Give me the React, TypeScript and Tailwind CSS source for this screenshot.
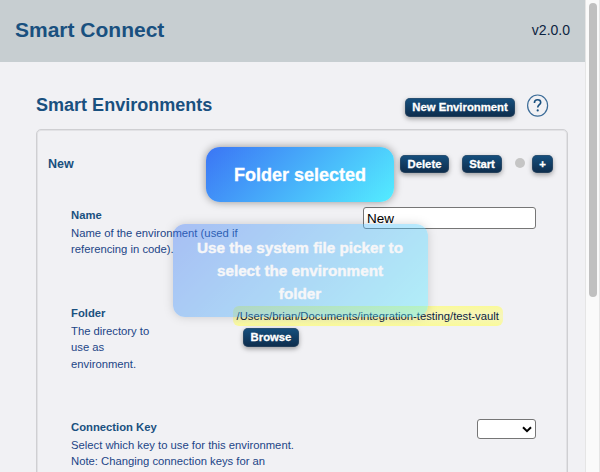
import React from "react";

const buttonStyle =
  "flex shrink-0 items-center justify-center rounded-[5px] bg-linear-to-b from-[#15507f] to-[#0d2c4b] pt-px text-[11.3px] leading-none font-bold text-white shadow-[0_2px_5px_rgba(0,0,0,0.35)] ring-1 ring-inset ring-[#3b5268]/50 [-webkit-text-stroke:0.3px_white]";

function Button({ label, className }: { label: string; className: string }) {
  return (
    <button type="button" className={`${buttonStyle} ${className}`}>
      {label}
    </button>
  );
}

function Setting({
  title,
  lines,
  className,
  children,
}: {
  title: string;
  lines: string[];
  className: string;
  children: React.ReactNode;
}) {
  return (
    <section className={`flex items-start justify-between pr-[31px] pl-[34px] ${className}`}>
      <div className="shrink-0 whitespace-nowrap text-[11.27px] leading-[16.5px] text-[#1c4587]">
        <h3 className="mb-px font-bold text-[#19507f]">{title}</h3>
        {lines.map((line) => (
          <p key={line}>{line}</p>
        ))}
      </div>
      {children}
    </section>
  );
}

export default function App() {
  return (
    <div
      className="relative flex h-[472px] w-[600px] overflow-hidden bg-[#f1f1f4]"
      style={{ fontFamily: '"Liberation Sans", Arial, sans-serif' }}
    >
      <div className="flex w-[585px] flex-col">
        <header className="flex h-[62px] shrink-0 items-center justify-between bg-[#c7ced1] pr-[15px] pl-[15px] pb-[2px]">
          <h1 className="text-[21px] leading-6 font-bold text-[#19507f]">Smart Connect</h1>
          <span className="text-[14px] leading-5 text-[#0c2340]">v2.0.0</span>
        </header>

        <main className="flex flex-1 flex-col pr-[17px] pl-[36px]">
          <div className="flex h-[67px] shrink-0 items-start pt-[32px]">
            <h2 className="flex-1 text-[18.05px] leading-[22px] font-bold text-[#19507f]">
              Smart Environments
            </h2>
            <Button label="New Environment" className="mt-[4px] h-[19px] w-[110px]" />
            <svg viewBox="0 0 22 24" className="mr-[19px] ml-[12px] h-[24px] w-[22px]" fill="none">
              <ellipse cx="10.6" cy="11.6" rx="10" ry="10.6" stroke="#3c6c98" strokeWidth="1.2" />
              <path
                d="M7.4 9C7.4 6.8 8.7 5.8 10.6 5.8C12.5 5.8 13.7 6.8 13.7 8.4C13.7 10.6 10.7 10.8 10.7 13.6"
                stroke="#19507f"
                strokeWidth="1.6"
              />
              <circle cx="10.7" cy="16.4" r="1.1" fill="#19507f" />
            </svg>
          </div>

          <div className="h-[400px] w-[532px] shrink-0 rounded-[5px] border border-[#cfcfd2] shadow-[inset_0_0_0_1px_#e2e2e5]">
            <div className="flex items-start pt-[25px] pl-[11px]">
              <span className="flex-1 pt-px text-[12.5px] leading-4 font-bold text-[#19507f]">
                New
              </span>
              <Button label="Delete" className="h-[18px] w-[49px]" />
              <Button label="Start" className="ml-[13px] h-[18px] w-[40px]" />
              <span className="mt-[3px] ml-[13px] h-[10px] w-[10px] rounded-full bg-[#c5c5c5]" />
              <Button label="+" className="mr-[14px] ml-[7px] h-[18px] w-[21px]" />
            </div>

            <Setting
              title="Name"
              lines={["Name of the environment (used if", "referencing in code)."]}
              className="mt-[34px] h-[98px]"
            >
              <div className="h-[22px] w-[173px] rounded-[3px] border border-[#767676] bg-white px-[3px] text-[13.5px] leading-[21px] text-black">
                New
              </div>
            </Setting>

            <Setting
              title="Folder"
              lines={["The directory to", "use as", "environment."]}
              className="h-[114px]"
            >
              <div className="mr-[33px] flex flex-col items-start">
                <span className="mt-[1px] h-[20px] w-[270px] rounded-[6px] bg-linear-to-b from-[#fafa99] via-[#f6f5bd] to-[#fafa99] pl-[3.5px] text-[11.27px] leading-[20px] whitespace-nowrap text-[#0c2340]">
                  /Users/brian/Documents/integration-testing/test-vault
                </span>
                <Button label="Browse" className="mt-[2px] ml-[10px] h-[19px] w-[56px]" />
              </div>
            </Setting>

            <Setting
              title="Connection Key"
              lines={[
                "Select which key to use for this environment.",
                "Note: Changing connection keys for an",
              ]}
              className="h-[60px]"
            >
              <div className="flex h-[20px] w-[59px] items-center justify-end rounded-[3px] border border-[#767676] bg-white pr-[3px]">
                <svg viewBox="0 0 10 7" className="h-[7px] w-[10px]" fill="none">
                  <path d="M1 1.2L5 5.2L9 1.2" stroke="black" strokeWidth="2" />
                </svg>
              </div>
            </Setting>
          </div>
        </main>
      </div>

      <div className="flex w-[15px] justify-center border-x border-[#e5e5e5] bg-[#fafafa] pt-[3px]">
        <div className="h-[294px] w-[8px] rounded-full bg-[#c0c0c0]" />
      </div>

      <div className="absolute top-[147px] left-[206px] flex h-[55px] w-[188px] items-center justify-center rounded-[14px] bg-linear-[135deg] from-[#3b75f5] to-[#54edff] pt-px text-[18px] font-bold text-white shadow-[0_0_8px_rgba(0,0,0,0.4)] [-webkit-text-stroke:0.3px_white]">
        Folder selected
      </div>
      <div className="absolute top-[224px] left-[172.5px] h-[93px] w-[255px] rounded-[12px] bg-linear-[135deg] from-[#3b75f5] to-[#54edff] px-[20px] pt-[12px] text-center text-[15.25px] leading-[23px] font-bold text-white opacity-40 shadow-[0_0_8px_rgba(0,0,0,0.4)] [-webkit-text-stroke:0.4px_white]">
        Use the system file picker to
        <br />
        select the environment
        <br />
        folder
      </div>
    </div>
  );
}
